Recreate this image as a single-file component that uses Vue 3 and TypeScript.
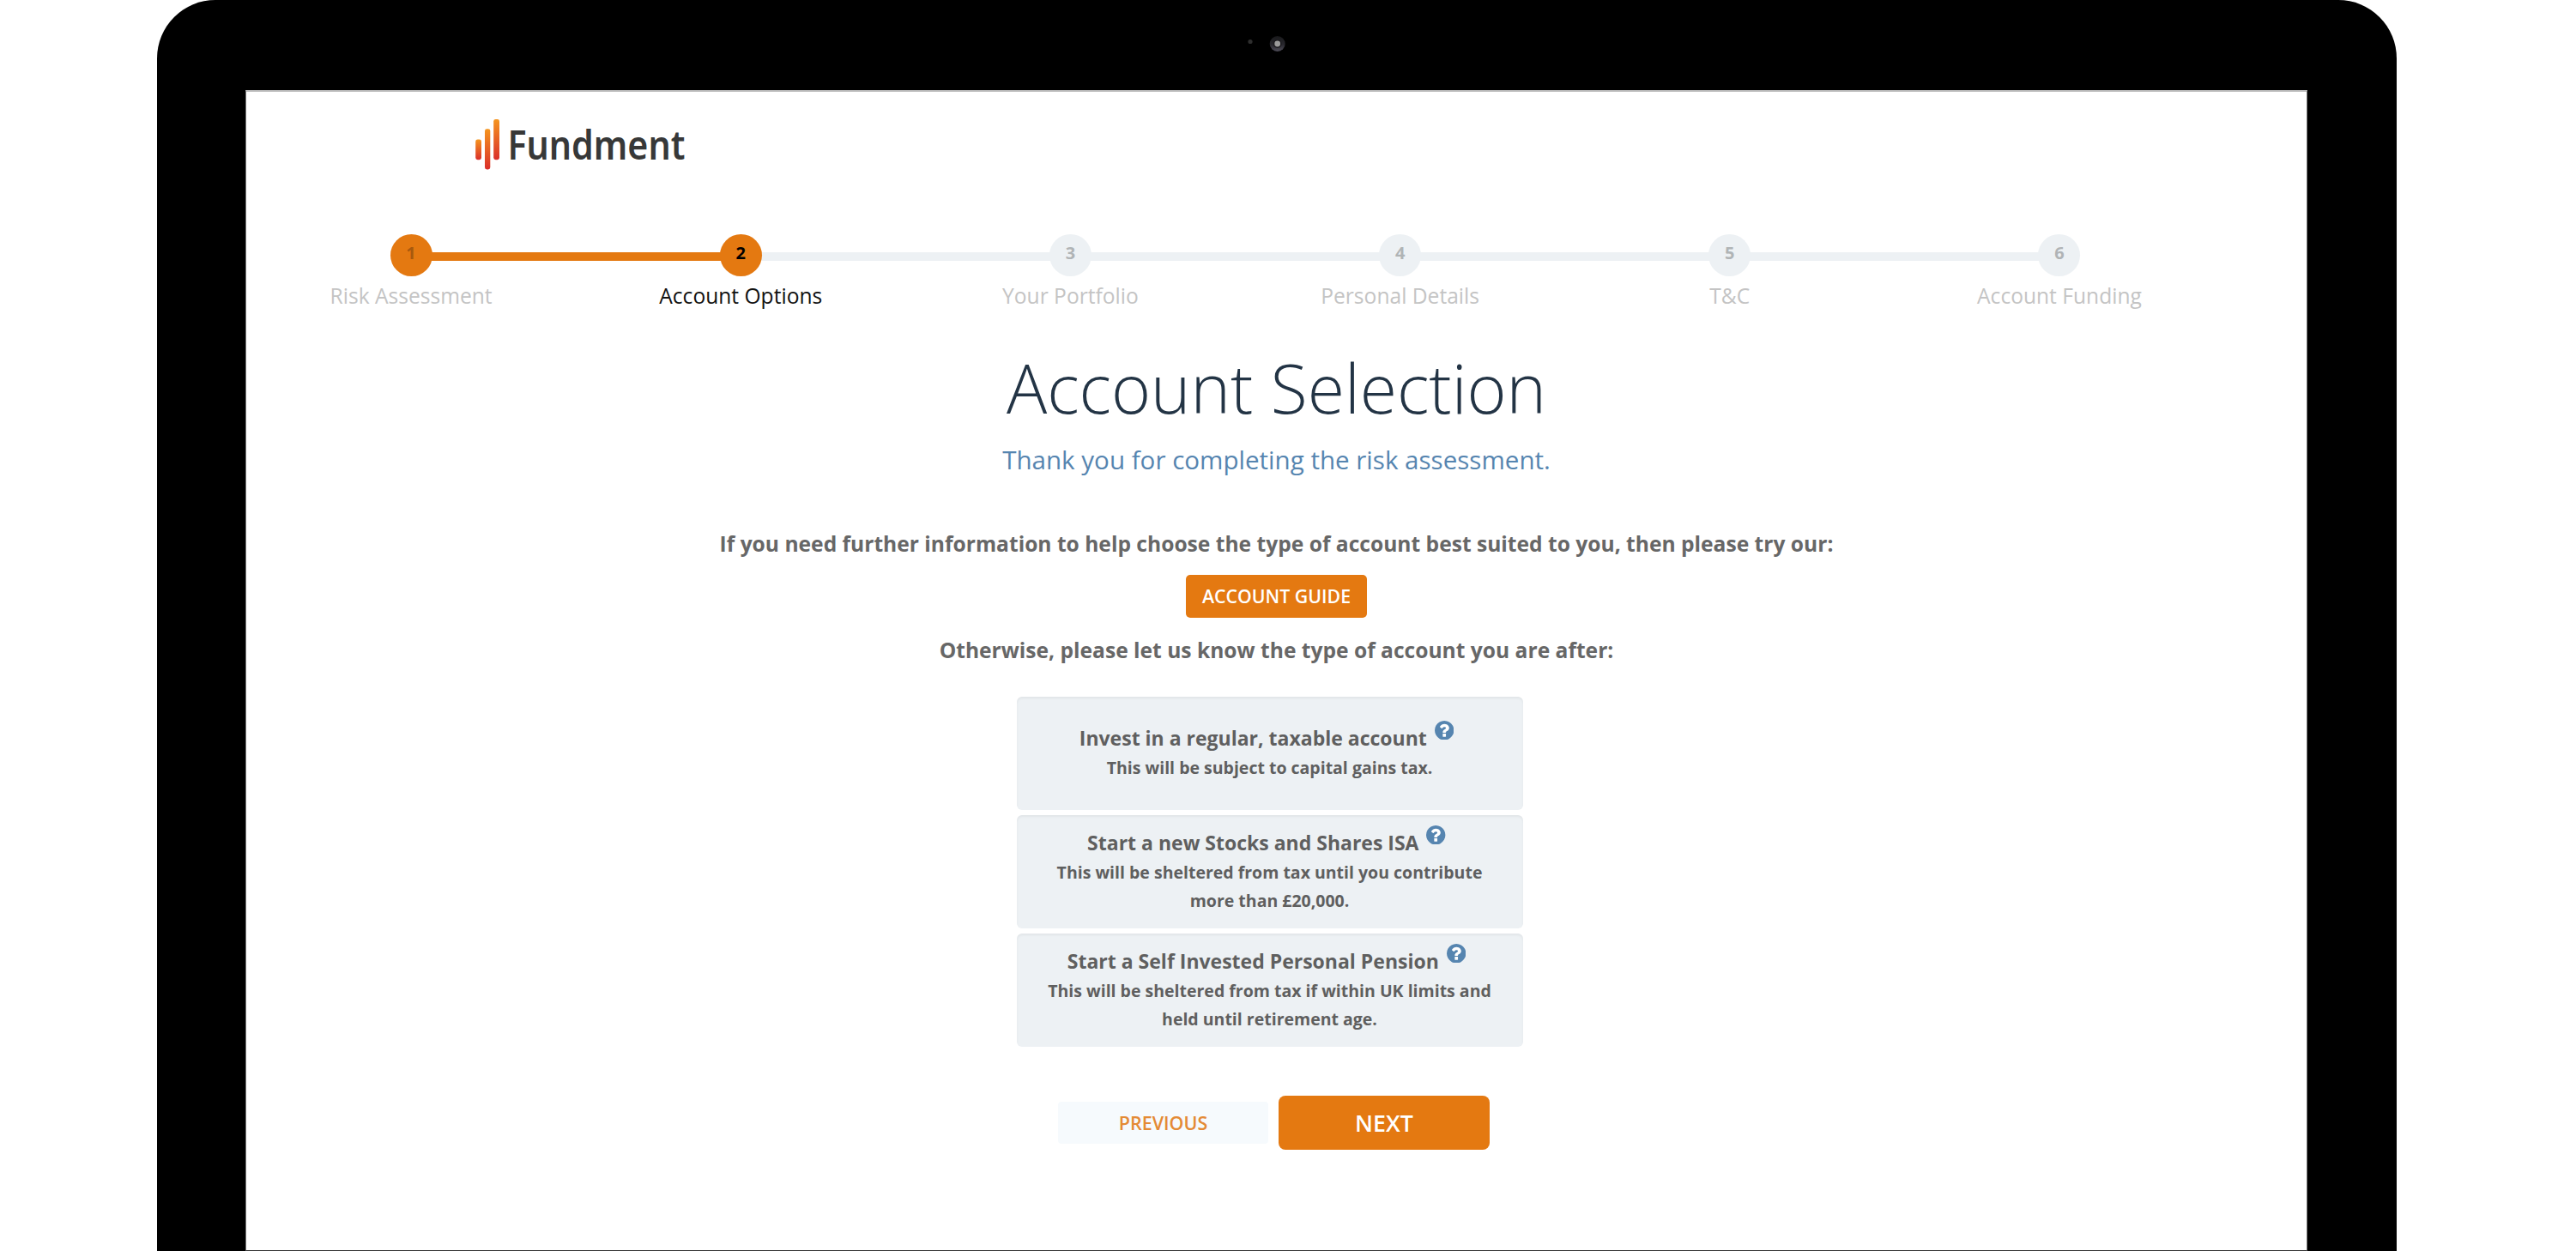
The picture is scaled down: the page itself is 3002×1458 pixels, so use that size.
<script setup lang="ts">
interface Step {
  label: string
  state: 'done' | 'active' | 'todo'
}

interface Option {
  title: string
  lines: string[]
}

const steps: Step[] = [
  { label: 'Risk Assessment', state: 'done' },
  { label: 'Account Options', state: 'active' },
  { label: 'Your Portfolio', state: 'todo' },
  { label: 'Personal Details', state: 'todo' },
  { label: 'T&C', state: 'todo' },
  { label: 'Account Funding', state: 'todo' },
]

const options: Option[] = [
  { title: 'Invest in a regular, taxable account', lines: ['This will be subject to capital gains tax.'] },
  {
    title: 'Start a new Stocks and Shares ISA',
    lines: ['This will be sheltered from tax until you contribute', 'more than £20,000.'],
  },
  {
    title: 'Start a Self Invested Personal Pension',
    lines: ['This will be sheltered from tax if within UK limits and', 'held until retirement age.'],
  },
]
</script>

<template>
  <div class="stage">
    <div class="device">
      <div class="bezel">
        <svg class="camera" width="60" height="24" viewBox="0 0 60 24">
          <defs>
            <linearGradient id="lens" x1="0" y1="0" x2="0" y2="1">
              <stop offset="0" stop-color="#19191b" />
              <stop offset="0.55" stop-color="#28272d" />
              <stop offset="1" stop-color="#504e5a" />
            </linearGradient>
          </defs>
          <circle cx="10" cy="9.5" r="2.6" fill="#2e2e2e" />
          <circle cx="41.7" cy="12" r="9" fill="url(#lens)" />
          <circle cx="41.7" cy="12" r="5" fill="#1d1c20" />
          <circle cx="41.7" cy="12" r="3.4" fill="#9b9b9b" />
        </svg>
      </div>
      <div class="screen">
        <header class="header">
          <svg class="logo" width="300" height="64" viewBox="0 0 300 64">
            <defs>
              <linearGradient id="bar" x1="0" y1="0" x2="0" y2="1">
                <stop offset="0" stop-color="#f5951f" />
                <stop offset="1" stop-color="#da2e2a" />
              </linearGradient>
            </defs>
            <rect x="0.2" y="25.5" width="6.8" height="23.7" rx="2.4" fill="url(#bar)" />
            <rect x="11" y="13.2" width="6.3" height="47.3" rx="2.4" fill="url(#bar)" />
            <rect x="21.2" y="2" width="6.8" height="47.2" rx="2.4" fill="url(#bar)" />
            <text x="37.4" y="48.7" textLength="207" lengthAdjust="spacingAndGlyphs">Fundment</text>
          </svg>
        </header>

        <ol class="steps">
          <li v-for="(step, i) in steps" :key="step.label" class="step" :class="step.state">
            <span class="dot">{{ i + 1 }}</span>
            <span class="label">{{ step.label }}</span>
          </li>
        </ol>

        <main class="content">
          <h1>Account Selection</h1>
          <p class="subtitle">Thank you for completing the risk assessment.</p>
          <p class="note">
            If you need further information to help choose the type of account best suited to you, then please try our:
          </p>
          <button class="btn guide">ACCOUNT GUIDE</button>
          <p class="note">Otherwise, please let us know the type of account you are after:</p>

          <div class="options">
            <div v-for="option in options" :key="option.title" class="option">
              <div class="title">
                {{ option.title }}
                <svg class="help" viewBox="128 128 1536 1536">
                  <circle cx="896" cy="896" r="740" fill="#fff" />
                  <path
                    fill="#5685b0"
                    d="M1024 1376v-192q0-14-9-23t-23-9h-192q-14 0-23 9t-9 23v192q0 14 9 23t23 9h192q14 0 23-9t9-23zm256-672q0-88-55.5-163t-138.5-116-170-41q-243 0-371 213-15 24 8 42l132 100q7 6 19 6 16 0 25-12 53-68 86-92 34-24 86-24 48 0 85.5 26t37.5 59q0 38-20 61t-68 45q-63 28-115.5 86.5t-52.5 125.5v36q0 14 9 23t23 9h192q14 0 23-9t9-23q0-19 21.5-49.5t54.5-49.5q32-18 49-28.5t46-35 44.5-48 28-60.5 12.5-81zm384 192q0 209-103 385.5t-279.5 279.5-385.5 103-385.5-103-279.5-279.5-103-385.5 103-385.5 279.5-279.5 385.5-103 385.5 103 279.5 279.5 103 385.5z"
                  />
                </svg>
              </div>
              <div v-for="line in option.lines" :key="line" class="detail">{{ line }}</div>
            </div>
          </div>

          <div class="actions">
            <button class="btn previous">PREVIOUS</button>
            <button class="btn next">NEXT</button>
          </div>
        </main>
      </div>
    </div>
  </div>
</template>

<style>
body {
  background: #fff;
}
</style>

<style scoped>
.stage {
  box-sizing: border-box;
  width: 3002px;
  height: 1458px;
  padding-left: 183px;
  overflow: hidden;
  font-family: 'Open Sans', 'Noto Sans', sans-serif;
}

.device {
  box-sizing: border-box;
  display: flex;
  flex-direction: column;
  width: 2610px;
  height: 1458px;
  padding: 0 104px 0 103px;
  border-radius: 68px 68px 0 0;
  background: #000;
}

.bezel {
  box-sizing: border-box;
  height: 105px;
  padding: 39px 0 0 1161px;
}

.camera {
  display: block;
}

.screen {
  box-sizing: border-box;
  flex: 1;
  display: flex;
  flex-direction: column;
  border: 1px solid #777;
  border-top: 2px solid #bdbdbd;
  border-bottom-color: #333;
  background: #fff;
}

.header {
  height: 166px;
  padding: 30px 0 0 267px;
  box-sizing: border-box;
}

.logo {
  display: block;
}

.logo text {
  font-family: 'Noto Sans', 'Open Sans', sans-serif;
  font-size: 46px;
  font-weight: 600;
  fill: #373838;
}

.steps {
  display: flex;
  width: 2305px;
  margin: 0;
  padding: 0;
  list-style: none;
}

.step {
  position: relative;
  display: flex;
  flex: 1;
  flex-direction: column;
  align-items: center;
}

/* connector running back to the previous step */
.step + .step::before {
  content: '';
  position: absolute;
  top: 21px;
  right: 50%;
  width: 100%;
  height: 10px;
  background: #edf1f4;
}

.step.active::before {
  background: #e47911;
}

.dot {
  position: relative;
  z-index: 1;
  width: 49px;
  height: 49px;
  border-radius: 50%;
  background: #edf1f4;
  color: #b0b4b6;
  font-size: 20px;
  font-weight: 700;
  line-height: 44px;
  text-align: center;
}

.done .dot {
  background: #e47911;
  color: #a8590d;
}

.active .dot {
  background: #e47911;
  color: #000;
}

.label {
  margin-top: 6px;
  color: #c4c4c4;
  font-size: 24.6px;
  line-height: 34px;
  white-space: nowrap;
}

.active .label {
  color: #111;
}

.content {
  display: flex;
  flex-direction: column;
  align-items: center;
}

h1 {
  margin: 45px 0 0;
  color: #233445;
  font-size: 78.7px;
  font-weight: 300;
  line-height: 90px;
}

.subtitle {
  margin: 18px 0 0;
  color: #5685b0;
  font-size: 29.55px;
  line-height: 42px;
}

.note {
  margin: 60px 0 0;
  color: #676767;
  font-size: 24.6px;
  font-weight: 700;
  line-height: 34px;
  white-space: nowrap;
}

.btn {
  display: block;
  padding: 0;
  border: 0;
  font-family: inherit;
  font-weight: 600;
  text-align: center;
}

.guide {
  width: 211px;
  height: 50px;
  margin-top: 19px;
  border-radius: 5px;
  background: #e47911;
  color: #fff;
  font-size: 21.3px;
  line-height: 50px;
}

.guide + .note {
  margin-top: 21px;
}

.options {
  display: flex;
  flex-direction: column;
  gap: 6px;
  width: 590px;
  margin: 37px 15px 0 0;
}

.option {
  box-sizing: border-box;
  height: 132px;
  padding-top: 16px;
  border-radius: 6px;
  background: #edf1f4;
  box-shadow: inset 0 2px 3px rgba(0, 20, 10, 0.05);
  color: #5f5f5f;
  font-weight: 700;
  text-align: center;
}

.option:first-child {
  padding-top: 32px;
}

.title {
  display: flex;
  justify-content: center;
  margin-right: 8px;
  font-size: 23px;
  line-height: 33px;
}

.help {
  width: 22.4px;
  height: 22.4px;
  margin: -4px 0 0 9px;
}

.detail {
  position: relative;
  top: 1px;
  margin-right: 1px;
  font-size: 19.5px;
  line-height: 33px;
}

.actions {
  display: flex;
  align-items: center;
  gap: 12px;
  margin: 57px 6px 0 0;
}

.previous {
  width: 245px;
  height: 49px;
  border-radius: 4px;
  background: #f6fafd;
  color: #e48a35;
  font-size: 21.5px;
  line-height: 49px;
}

.next {
  width: 246px;
  height: 63px;
  border-radius: 8px;
  background: #e47911;
  color: #fff;
  font-size: 26.8px;
  line-height: 63px;
}
</style>
